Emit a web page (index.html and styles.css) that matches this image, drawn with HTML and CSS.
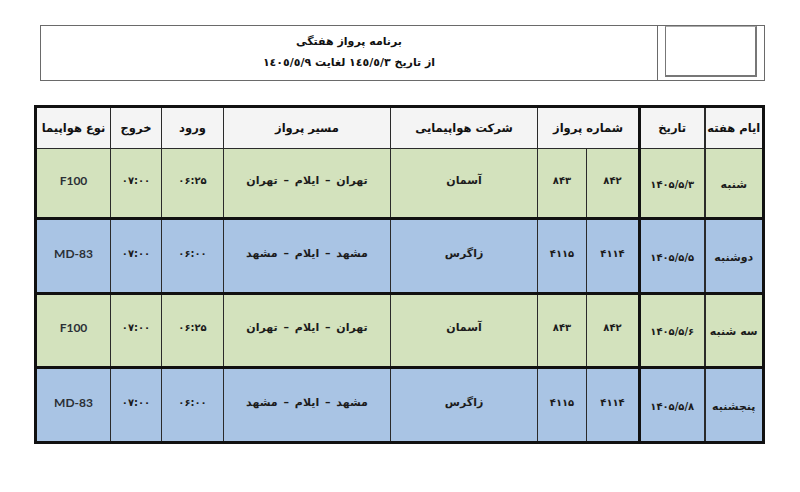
FILE: index.html
```html
<!DOCTYPE html>
<html lang="fa" dir="rtl">
<head>
<meta charset="utf-8">
<title>برنامه پرواز هفتگی</title>
<link rel="stylesheet" href="styles.css">
</head>
<body>
<div class="page">
  <div class="titlebox">
    <div class="logo-area"><div class="logo-box"></div></div>
    <div class="title-area">
      <div class="title-line">برنامه پرواز هفتگی</div>
      <div class="title-line">از تاریخ ١٤٥/٥/٣ لغایت ١٤٠٥/٥/٩</div>
    </div>
  </div>

  <table class="schedule">
    <colgroup>
      <col class="c-day"><col class="c-date"><col class="c-no1"><col class="c-no2"><col class="c-air"><col class="c-route"><col class="c-in"><col class="c-out"><col class="c-type">
    </colgroup>
    <thead>
      <tr class="head">
        <th class="day">ایام هفته</th>
        <th class="date">تاریخ</th>
        <th colspan="2" class="no">شماره پرواز</th>
        <th>شرکت هواپیمایی</th>
        <th>مسیر پرواز</th>
        <th>ورود</th>
        <th>خروج</th>
        <th>نوع هواپیما</th>
      </tr>
    </thead>
    <tbody>
      <tr class="green r1">
        <td class="day word low">شنبه</td>
        <td class="date num low">۱۴۰۵/۵/۳</td>
        <td class="no1 num up">۸۴۲</td>
        <td class="num up">۸۴۳</td>
        <td class="word up">آسمان</td>
        <td class="word route up">تهران – ایلام – تهران</td>
        <td class="num up">۰۶:۲۵</td>
        <td class="num up">۰۷:۰۰</td>
        <td class="latin up">F100</td>
      </tr>
      <tr class="blue r2">
        <td class="day word low">دوشنبه</td>
        <td class="date num low">۱۴۰۵/۵/۵</td>
        <td class="no1 num up">۴۱۱۴</td>
        <td class="num up">۴۱۱۵</td>
        <td class="word up">زاگرس</td>
        <td class="word route up">مشهد – ایلام – مشهد</td>
        <td class="num up">۰۶:۰۰</td>
        <td class="num up">۰۷:۰۰</td>
        <td class="latin up">MD-83</td>
      </tr>
      <tr class="green r3">
        <td class="day word low">سه شنبه</td>
        <td class="date num low">۱۴۰۵/۵/۶</td>
        <td class="no1 num up">۸۴۲</td>
        <td class="num up">۸۴۳</td>
        <td class="word up">آسمان</td>
        <td class="word route up">تهران – ایلام – تهران</td>
        <td class="num up">۰۶:۲۵</td>
        <td class="num up">۰۷:۰۰</td>
        <td class="latin up">F100</td>
      </tr>
      <tr class="blue r4">
        <td class="day word low">پنجشنبه</td>
        <td class="date num low">۱۴۰۵/۵/۸</td>
        <td class="no1 num up">۴۱۱۴</td>
        <td class="num up">۴۱۱۵</td>
        <td class="word up">زاگرس</td>
        <td class="word route up">مشهد – ایلام – مشهد</td>
        <td class="num up">۰۶:۰۰</td>
        <td class="num up">۰۷:۰۰</td>
        <td class="latin up">MD-83</td>
      </tr>
    </tbody>
  </table>
</div>
</body>
</html>
```

FILE: styles.css
```css
html, body {
  margin: 0;
  padding: 0;
  background: #ffffff;
}

body {
  font-family: "DejaVu Sans", "Noto Sans", sans-serif;
  color: #151515;
}

.page {
  width: 800px;
  height: 492px;
  padding-top: 25px;
  box-sizing: border-box;
}

.titlebox {
  margin-right: 35px;
  margin-left: 40px;
  height: 56px;
  border: 1px solid #6a6a6a;
  box-sizing: border-box;
  display: flex;
  flex-direction: row;
}

.logo-area {
  width: 107px;
  border-left: 1px solid #6a6a6a;
  box-sizing: border-box;
  padding: 0 7px 3px 7px;
  display: flex;
}

.logo-box {
  flex: 1;
  border: 1px solid #777;
  border-right: 2px solid #777;
  border-bottom: 2px solid #777;
  border-top-color: #aaa;
}

.title-area {
  flex: 1;
  display: flex;
  flex-direction: column;
  align-items: center;
  justify-content: center;
  gap: 8px;
  padding-bottom: 2px;
}

.title-line {
  font-size: 11px;
  font-weight: bold;
  line-height: 13px;
  color: #111;
}

.schedule {
  margin-top: 24px;
  margin-left: 36px;
  margin-right: 35px;
  width: 729px;
  border-collapse: collapse;
  table-layout: fixed;
  border: 3px solid #111;
}

.c-day { width: 59px; }
.c-date { width: 65px; }
.c-no1 { width: 53px; }
.c-no2 { width: 49px; }
.c-air { width: 147px; }
.c-route { width: 167px; }
.c-in { width: 62px; }
.c-out { width: 51px; }
.c-type { width: 75px; }

.schedule th,
.schedule td {
  border: 1px solid #2a2a2a;
  text-align: center;
  vertical-align: middle;
  padding: 0;
  font-weight: bold;
  white-space: nowrap;
}

.schedule th {
  background: #f4f4f4;
  font-size: 11.5px;
  color: #111;
}

.schedule td {
  font-size: 10px;
  color: #1c1c1c;
}

.schedule td.word {
  font-size: 11px;
}

.schedule td.route {
  word-spacing: 2px;
}

.schedule td.num {
  font-size: 10px;
}

.schedule td.date {
  letter-spacing: -0.3px;
}

.schedule .day {
  border-left-width: 2px;
}

.schedule .date {
  border-left: 3px solid #111;
}

.head { height: 42px; }
.r1 { height: 70px; }
.r2 { height: 75px; }
.r3 { height: 74px; }
.r4 { height: 75px; }

.r2 td, .r3 td, .r4 td {
  border-top: 3px solid #111;
}

.green td { background: #d3e2bd; }
.blue td { background: #a9c4e4; }

.schedule td.up { padding-bottom: 6px; }
.schedule td.low { padding-top: 2px; }

.schedule td.latin {
  font-family: "Lato", "Open Sans", sans-serif;
  font-size: 12px;
  color: #2b3036;
}
```
